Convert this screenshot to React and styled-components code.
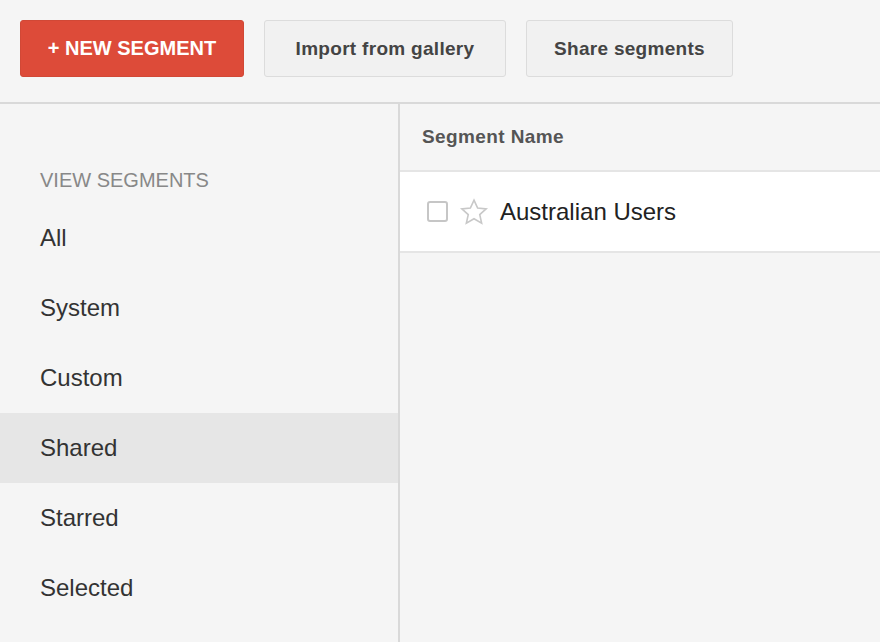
import React from "react";
import styled, { createGlobalStyle } from "styled-components";

const G = createGlobalStyle`
  html,body{margin:0;padding:0;background:#f5f5f5;font-family:Arial,"Liberation Sans",sans-serif;}
`;
const Page = styled.div`width:880px;height:642px;overflow:hidden;background:#f5f5f5;display:flex;flex-direction:column;`;
const Toolbar = styled.div`height:104px;display:flex;align-items:flex-start;gap:20px;padding:20px 0 0 20px;box-sizing:border-box;border-bottom:2px solid #d9d9d9;`;
const Btn = styled.button`
  height:57px;padding:0;border-radius:3px;font-family:inherit;font-weight:bold;font-size:${p => p.$primary ? 20 : 19}px;
  letter-spacing:${p => p.$primary ? 0 : 0.3}px;
  background:${p => p.$primary ? "#dd4b39" : "#f1f1f1"};color:${p => p.$primary ? "#fff" : "#444"};
  border:1px solid ${p => p.$primary ? "#d14836" : "#dcdcdc"};width:${p => p.$w}px;
`;
const Body = styled.div`flex:1;display:flex;`;
const Side = styled.div`width:398px;border-right:2px solid #d9d9d9;padding-top:57px;`;
const Label = styled.div`color:#888;font-size:20px;padding-left:40px;height:42px;line-height:38px;`;
const Item = styled.div`height:70px;line-height:70px;padding-left:40px;font-size:24px;color:#333;background:${p => p.$active ? "#e6e6e6" : "transparent"};`;
const Main = styled.div`flex:1;display:flex;flex-direction:column;`;
const Head = styled.div`height:66px;line-height:66px;padding-left:22px;font-weight:bold;font-size:19px;letter-spacing:0.4px;color:#555;border-bottom:2px solid #e5e5e5;`;
const Row = styled.div`height:79px;background:#fff;border-bottom:2px solid #e5e5e5;display:flex;align-items:center;padding-left:27px;gap:10px;font-size:24px;color:#222;`;
const Check = styled.span`width:21px;height:21px;border:2px solid #c6c6c6;border-radius:3px;box-sizing:border-box;background:#fff;`;

export default function App(){
  const items=["All","System","Custom","Shared","Starred","Selected"];
  return <Page><G/>
    <Toolbar>
      <Btn $primary $w={224}>+ NEW SEGMENT</Btn>
      <Btn $w={242}>Import from gallery</Btn>
      <Btn $w={207}>Share segments</Btn>
    </Toolbar>
    <Body>
      <Side>
        <Label>VIEW SEGMENTS</Label>
        {items.map(i=><Item key={i} $active={i==="Shared"}>{i}</Item>)}
      </Side>
      <Main>
        <Head>Segment Name</Head>
        <Row><Check/>
          <svg width="32" height="30" viewBox="0 0 24 24" fill="none" stroke="#c8c8c8" strokeWidth="1.3"><path d="M12 2.5l2.9 6.3 6.8.7-5.1 4.6 1.5 6.8L12 17.4l-6.1 3.5 1.5-6.8-5.1-4.6 6.8-.7z"/></svg>
          <span>Australian Users</span>
        </Row>
      </Main>
    </Body>
  </Page>;
}
